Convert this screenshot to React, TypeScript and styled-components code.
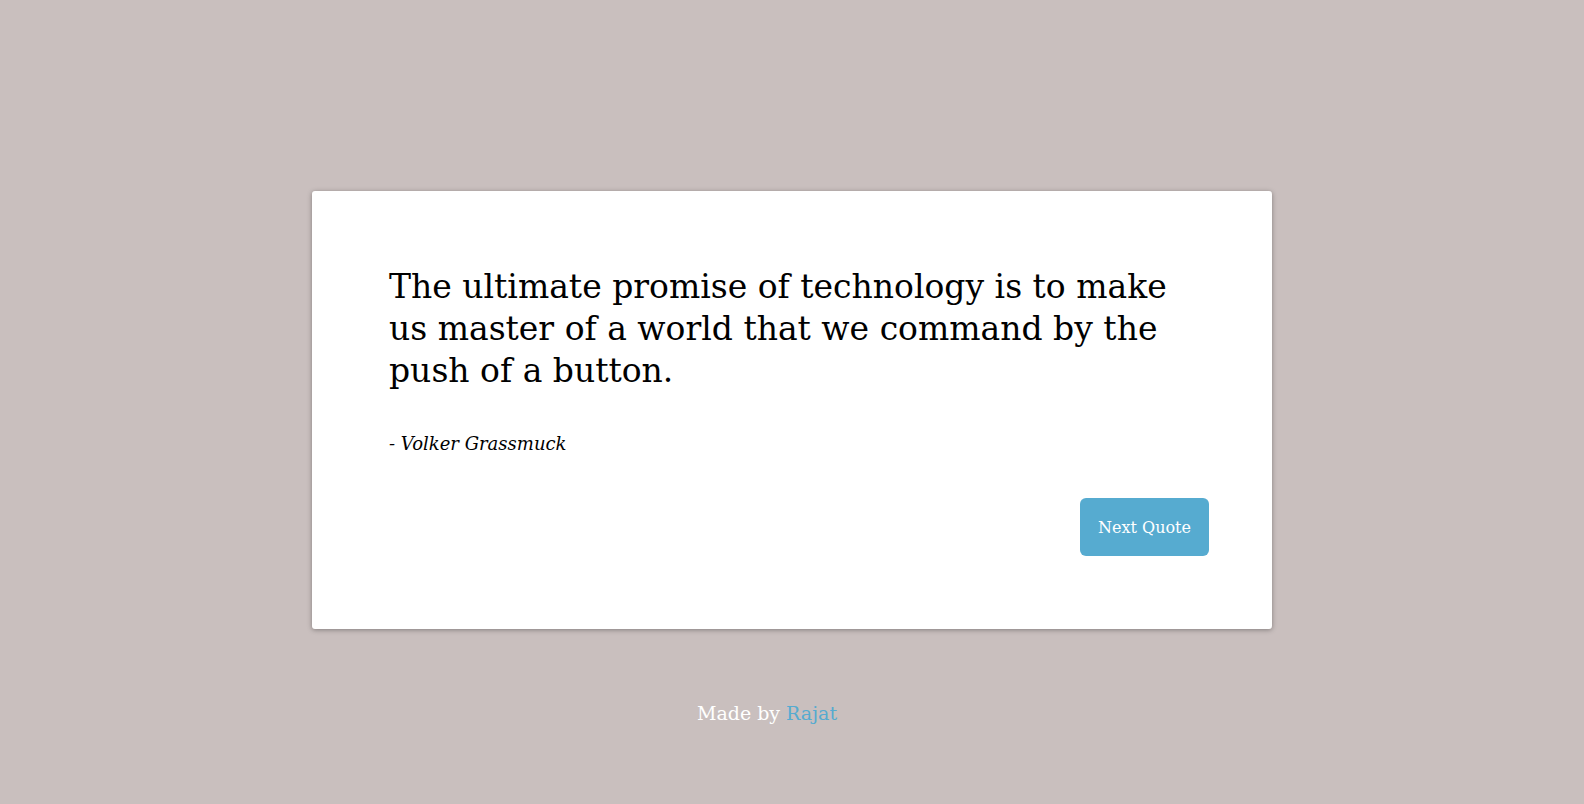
import React from "react";
import styled, { createGlobalStyle } from "styled-components";

const Global = createGlobalStyle`
  html, body { margin: 0; padding: 0; }
  body {
    background: #c9bfbe;
    font-family: "DejaVu Serif", "Liberation Serif", serif;
  }
`;

const Page = styled.div`
  min-height: 804px;
  display: flex;
  flex-direction: column;
  align-items: center;
  padding-top: 191px;
  box-sizing: border-box;
`;

const Card = styled.div`
  width: 960px;
  height: 438px;
  box-sizing: border-box;
  background: #ffffff;
  border-radius: 3px;
  box-shadow: 0 1px 5px rgba(0, 0, 0, 0.35);
  padding: 75px 63px 73px 77px;
  display: flex;
  flex-direction: column;
`;

const QuoteText = styled.p`
  margin: 0;
  font-size: 33px;
  line-height: 42px;
  color: #000;
  max-width: 790px;
`;

const Author = styled.p`
  margin: 41px 0 0;
  font-size: 18px;
  font-style: italic;
  color: #000;
`;

const Actions = styled.div`
  margin-top: auto;
  display: flex;
  justify-content: flex-end;
`;

const Button = styled.button`
  width: 129px;
  height: 58px;
  border: none;
  border-radius: 6px;
  background: #56abd0;
  color: #fff;
  font-family: inherit;
  font-size: 16px;
  cursor: pointer;
`;

const Footer = styled.p`
  margin: 73px 0 0;
  font-size: 19px;
  color: #fff;
  transform: translateX(-25px);
`;

const Link = styled.a`
  color: #56abd0;
  text-decoration: none;
`;

export default function App() {
  return (
    <>
      <Global />
      <Page>
        <Card>
          <QuoteText>
            The ultimate promise of technology is to make us master of a world that we command by the push of a button.
          </QuoteText>
          <Author>- Volker Grassmuck</Author>
          <Actions>
            <Button>Next Quote</Button>
          </Actions>
        </Card>
        <Footer>
          Made by <Link href="#">Rajat</Link>
        </Footer>
      </Page>
    </>
  );
}
